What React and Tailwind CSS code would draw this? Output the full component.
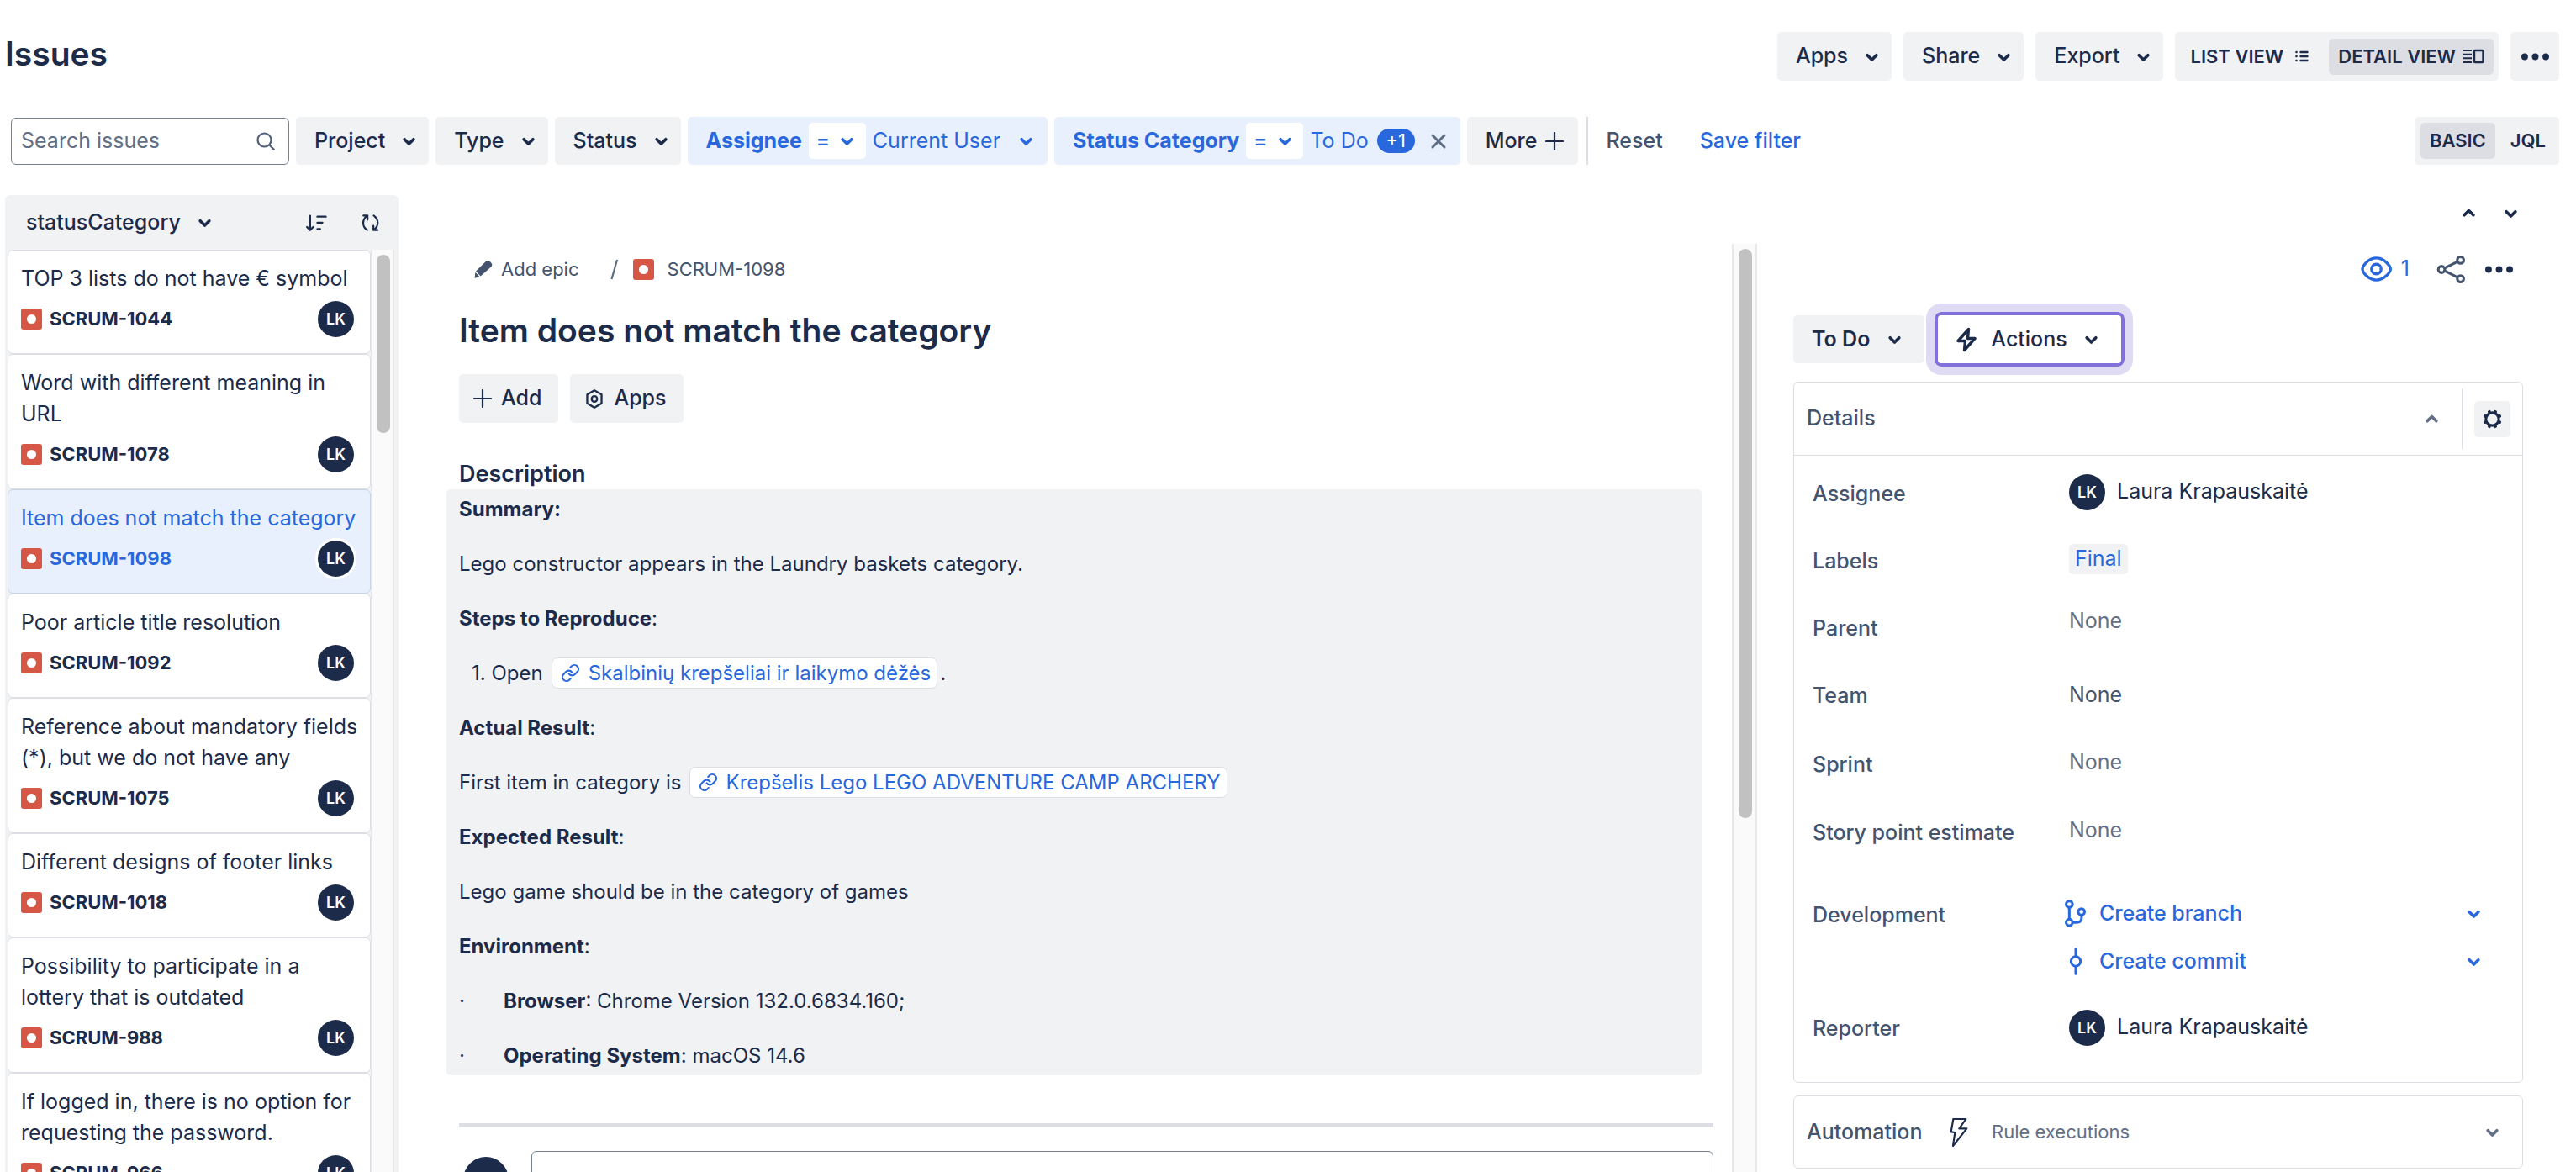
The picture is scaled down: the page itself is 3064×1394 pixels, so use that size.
import { Link } from "lucide-react";

const ISSUES = [
  { title: "TOP 3 lists do not have € symbol", id: "SCRUM-1044" },
  { title: "Word with different meaning in URL", id: "SCRUM-1078" },
  { title: "Item does not match the category", id: "SCRUM-1098", selected: true },
  { title: "Poor article title resolution", id: "SCRUM-1092" },
  { title: "Reference about mandatory fields (*), but we do not have any", id: "SCRUM-1075" },
  { title: "Different designs of footer links", id: "SCRUM-1018" },
  { title: "Possibility to participate in a lottery that is outdated", id: "SCRUM-988" },
  { title: "If logged in, there is no option for requesting the password.", id: "SCRUM-966" },
];

function Chevron({ up = false, className = "" }) {
  return (
    <svg viewBox="0 0 24 24" fill="none" stroke="currentColor" strokeWidth="2" strokeLinecap="round" strokeLinejoin="round" className={`size-[43px] shrink-0 ${className}`} aria-hidden="true">
      <path d={up ? "M9 13.3l3-3 3 3" : "M9 11l3 3 3-3"} />
    </svg>
  );
}

function Dots() {
  return (
    <svg viewBox="0 0 24 24" fill="currentColor" className="size-[43px]" aria-hidden="true">
      <circle cx="5" cy="12" r="2.2" />
      <circle cx="12" cy="12" r="2.2" />
      <circle cx="19" cy="12" r="2.2" />
    </svg>
  );
}

function BugIcon() {
  return (
    <svg viewBox="0 0 25 25" className="size-[25px] shrink-0" aria-hidden="true">
      <rect width="25" height="25" rx="3" fill="#d65745" />
      <circle cx="12.5" cy="12.5" r="5.5" fill="#fff" />
    </svg>
  );
}

function Plus({ className = "" }) {
  return (
    <svg viewBox="0 0 22 22" stroke="currentColor" strokeWidth="2.2" strokeLinecap="round" className={`size-[22px] shrink-0 ${className}`} aria-hidden="true">
      <path d="M11 1v20M1 11h20" />
    </svg>
  );
}

function Avatar({ ring = false }) {
  return (
    <span className={`flex size-[43px] shrink-0 items-center justify-center rounded-full bg-[#1c2b4a] text-[18px] font-semibold text-white ${ring ? "ring-[3px] ring-white" : ""}`}>
      LK
    </span>
  );
}

function MenuButton({ children, tall = false, status = false }) {
  return (
    <button className={`flex shrink-0 items-center rounded-[5px] bg-[#f1f2f4] pl-[22px] ${tall ? "h-[58px]" : "h-[57px]"} ${status ? "gap-2 pr-[14px] font-semibold" : "gap-[7px] pr-0.5 font-medium"}`}>
      {children}
      <Chevron />
    </button>
  );
}

function OperatorButton() {
  return (
    <button className="mx-2 flex h-[43px] w-[68px] items-center justify-center rounded-[5px] bg-white pl-2 font-medium" aria-label="Operator">
      =
      <Chevron className="-ml-px" />
    </button>
  );
}

function Header() {
  return (
    <header className="flex items-center justify-between pr-5 pl-1.5">
      <h1 className="mb-1.5 text-[39px] leading-[48px] font-semibold">Issues</h1>
      <div className="flex gap-[14px]">
        <MenuButton tall>Apps</MenuButton>
        <MenuButton tall>Share</MenuButton>
        <MenuButton tall>Export</MenuButton>
        <div className="flex items-center rounded-[5px] bg-[#f1f2f4] pr-1.5 text-[22px] font-semibold">
          <button className="flex h-[43px] items-center gap-[14px] pr-6 pl-[18px]">
            LIST VIEW
            <svg viewBox="0 0 16 14" stroke="currentColor" strokeWidth="2.4" strokeLinecap="round" className="h-[14px] w-4" aria-hidden="true">
              <path d="M1.4 2h.2M6.5 2h8M1.4 7h.2M6.5 7h8M1.4 12h.2M6.5 12h8" />
            </svg>
          </button>
          <button className="flex h-[43px] items-center gap-2 rounded-[5px] bg-[#dddee4] px-[11px]">
            DETAIL VIEW
            <svg viewBox="0 0 26 18" fill="none" stroke="currentColor" strokeWidth="2" className="h-[18px] w-[26px]" aria-hidden="true">
              <path d="M1 2h10M1 6.7h10M1 11.3h10M1 16h10" />
              <rect x="14" y="2" width="10.5" height="14" rx="1" strokeWidth="2.4" />
            </svg>
          </button>
        </div>
        <button className="flex size-[58px] items-center justify-center rounded-[5px] bg-[#f1f2f4]" aria-label="More actions">
          <Dots />
        </button>
      </div>
    </header>
  );
}

function Filters() {
  return (
    <div className="mt-[43px] flex items-center pr-5 pl-[13px]">
      <div className="flex flex-1 items-center gap-2">
        <label className="flex h-[56px] w-[331px] shrink-0 items-center rounded-[6px] border border-[#758195] pr-4 pl-[11px]">
          <span className="sr-only">Search issues</span>
          <input type="text" placeholder="Search issues" className="min-w-0 flex-1 bg-transparent outline-none placeholder:text-[#626f86]" />
          <svg viewBox="0 0 22 22" fill="none" stroke="#505f79" strokeWidth="2.2" strokeLinecap="round" className="size-[22px]" aria-hidden="true">
            <circle cx="9.5" cy="9.5" r="8" />
            <path d="M15.5 15.5l5.3 5.3" />
          </svg>
        </label>
        <MenuButton>Project</MenuButton>
        <MenuButton>Type</MenuButton>
        <MenuButton>Status</MenuButton>
        <div className="flex h-[57px] items-center rounded-[5px] bg-[#e9f0fd] pr-1 pl-[22px] text-[#2868dc]">
          <span className="font-bold">Assignee</span>
          <OperatorButton />
          <button className="flex items-center gap-[9px]">
            Current User
            <Chevron />
          </button>
        </div>
        <div className="flex h-[57px] items-center rounded-[5px] bg-[#e9f0fd] pr-4 pl-[22px] text-[#2868dc]">
          <span className="font-bold">Status Category</span>
          <OperatorButton />
          <button className="flex items-center gap-2.5">
            To Do
            <span className="flex h-[29px] w-[45px] items-center justify-center rounded-full bg-[#2868dc] text-[22px] text-white">+1</span>
          </button>
          <button className="ml-[18px]" aria-label="Clear status category">
            <svg viewBox="0 0 20 20" stroke="#5e6c84" strokeWidth="3" strokeLinecap="round" className="size-5" aria-hidden="true">
              <path d="M3 3l14 14M17 3L3 17" />
            </svg>
          </button>
        </div>
        <button className="flex h-[57px] items-center gap-2.5 rounded-[5px] bg-[#f1f2f4] pr-[17px] pl-[22px] font-medium">
          More
          <Plus />
        </button>
        <span className="ml-0.5 h-[57px] w-0.5 bg-[#dddee4]" />
        <button className="ml-[13px] font-medium text-[#44546f]">Reset</button>
        <button className="ml-9 font-medium text-[#2868dc]">Save filter</button>
      </div>
      <div className="flex h-[57px] items-center rounded-[5px] bg-[#f1f2f4] px-[7px] text-[22px] font-semibold">
        <button className="h-[43px] rounded-[5px] bg-[#dddee4] px-[11px]">BASIC</button>
        <button className="h-[43px] pr-[9px] pl-[18px]">JQL</button>
      </div>
    </div>
  );
}

function IssueCard({ title, id, selected }) {
  return (
    <li className={`rounded-[6px] border pt-[15px] pr-1 pb-[19px] pl-[15px] ${selected ? "border-[#c8d3e8] bg-[#e9f0fd] text-[#2868dc]" : "border-[#dddee4] bg-white"}`}>
      <a href={`#${id}`} className="block leading-[37px]">{title}</a>
      <div className="mt-2 flex items-center pr-[15px]">
        <BugIcon />
        <span className="ml-[9px] flex-1 text-[22px] font-bold">{id}</span>
        <Avatar ring={selected} />
      </div>
    </li>
  );
}

function Sidebar() {
  return (
    <aside className="ml-1.5 flex w-[468px] shrink-0 flex-col rounded-t-[6px] bg-[#f1f2f4] pr-[5px] pl-[3px]">
      <div className="flex h-[65px] shrink-0 items-center pr-[17px] pl-[22px]">
        <button className="flex items-center gap-[7px] font-medium">
          statusCategory
          <Chevron />
        </button>
        <button className="ml-auto" aria-label="Sort direction">
          <svg viewBox="400 370 80 66" fill="none" stroke="currentColor" strokeWidth="7" strokeLinecap="round" strokeLinejoin="round" className="h-[22px] w-[27px]" aria-hidden="true">
            <path d="M417 378v50M406 418l11 11 11-11M443 381h30M443 403h18M443 425h10" />
          </svg>
        </button>
        <button className="ml-[39px]" aria-label="Refresh">
          <svg viewBox="600 370 68 66" fill="none" stroke="currentColor" strokeWidth="6.5" strokeLinecap="round" strokeLinejoin="round" className="h-[22px] w-[23px]" aria-hidden="true">
            <path d="M623 429c-19-13-19-36-1-51M609 377h15v15M646 377c19 14 19 37 1 51M660 429h-15v-15" />
          </svg>
        </button>
      </div>
      <div className="flex min-h-0 flex-1">
        <ul className="min-w-0 flex-1">
          {ISSUES.map((issue) => (
            <IssueCard key={issue.id} {...issue} />
          ))}
        </ul>
        <div className="w-7 shrink-0 border-x-2 border-[#e8e8ea] bg-[#fafafa] pt-1.5 pr-[3px] pl-[5px]">
          <div className="h-[212px] rounded-full bg-[#c1c1c1]" />
        </div>
      </div>
    </aside>
  );
}

function SmartLink({ children }) {
  return (
    <a href="#link" className="flex h-[37px] items-center gap-2.5 rounded-[7px] border border-[#dddee4] bg-white pr-[7px] pl-2.5 text-[#2868dc]">
      <Link className="size-[23px]" strokeWidth={2.2} />
      {children}
    </a>
  );
}

function Description() {
  return (
    <div className="mr-[14px] space-y-[22px] rounded-[5px] bg-[#f1f2f4] px-[15px] py-0.5 text-[24px] leading-[43px]">
      <p><strong>Summary:</strong></p>
      <p>Lego constructor appears in the Laundry baskets category.</p>
      <p><strong>Steps to Reproduce</strong>:</p>
      <ol>
        <li className="flex items-center pl-[15px]">
          1. Open
          <span className="w-2.5" />
          <SmartLink>Skalbinių krepšeliai ir laikymo dėžės</SmartLink>
          <span className="ml-[3px]">.</span>
        </li>
      </ol>
      <p><strong>Actual Result</strong>:</p>
      <p className="flex h-[43px] items-center gap-[9px]">
        First item in category is
        <SmartLink>Krepšelis Lego LEGO ADVENTURE CAMP ARCHERY</SmartLink>
      </p>
      <p><strong>Expected Result</strong>:</p>
      <p>Lego game should be in the category of games</p>
      <p><strong>Environment</strong>:</p>
      <p className="flex"><span className="w-[53px]">·</span><span><strong>Browser</strong>: Chrome Version 132.0.6834.160;</span></p>
      <p className="flex"><span className="w-[53px]">·</span><span><strong>Operating System</strong>: macOS 14.6</span></p>
    </div>
  );
}

function IssueContent() {
  return (
    <div className="min-w-0 flex-1 pr-[22px] pl-[57px]">
      <div className="pl-[15px]">
        <nav className="flex h-[60px] items-center pl-[18px] text-[22px] text-[#44546f]">
          <svg viewBox="72 60 64 64" fill="#44546f" className="size-[22px]" aria-hidden="true">
            <path d="M113 65q8-5 16 3t3 15l-38 34-16-18zM76 103l14 15-15 5q-2 0-1-3z" />
          </svg>
          <button className="ml-2.5">Add epic</button>
          <svg viewBox="0 0 9 25" stroke="#5e6c84" strokeWidth="2.2" className="ml-[37px] h-[25px] w-[9px]" aria-hidden="true">
            <path d="M8 1L1.500 24" />
          </svg>
          <span className="w-[18px]" />
          <BugIcon />
          <a href="#SCRUM-1098" className="ml-4">SCRUM-1098</a>
        </nav>
        <h2 className="mt-[19px] text-[39px] leading-[48px] font-semibold">Item does not match the category</h2>
        <div className="mt-7 flex gap-[14px] font-medium">
          <button className="flex h-[58px] items-center gap-[11px] rounded-[5px] bg-[#f1f2f4] pr-5 pl-[17px]">
            <Plus />
            Add
          </button>
          <button className="flex h-[58px] items-center gap-3 rounded-[5px] bg-[#f1f2f4] pr-5 pl-[18px]">
            <svg viewBox="472 518 66 70" fill="none" stroke="currentColor" strokeWidth="7" strokeLinejoin="round" className="h-[23px] w-[22px]" aria-hidden="true">
              <path d="M505 522l26 15v32l-26 15-26-15v-32z" />
              <circle cx="505" cy="553" r="10" />
            </svg>
            Apps
          </button>
        </div>
        <h3 className="mt-[43px] text-[27px] leading-9 font-semibold">Description</h3>
      </div>
      <Description />
      <div className="pl-[15px]">
        <hr className="mt-[57px] h-1 border-0 bg-[#dddee4]" />
        <div className="mt-[29px] flex pl-[5px]">
          <span className="mt-[7px] mr-[27px] size-[54px] rounded-full bg-[#1c2b4a]" />
          <textarea aria-label="Add a comment" className="h-[90px] flex-1 resize-none rounded-[6px] border border-[#758195]" />
        </div>
      </div>
    </div>
  );
}

const NONE = <span className="text-[#626f86]">None</span>;

const PERSON = (
  <span className="flex items-center gap-[14px]">
    <Avatar />
    Laura Krapauskaitė
  </span>
);

const FIELDS = [
  { label: "Assignee", height: "h-20", shift: "pb-1", value: PERSON },
  { label: "Labels", height: "h-20", shift: "pb-1", value: <a href="#final" className="flex h-9 items-center rounded-[5px] bg-[#f1f2f4] px-[7px] text-[#2868dc]">Final</a> },
  { label: "Parent", height: "h-20", shift: "pb-4", value: NONE },
  { label: "Team", height: "h-20", shift: "", value: <span className="text-[#44546f]">None</span> },
  { label: "Sprint", height: "h-[84px]", shift: "pb-1", value: NONE },
  { label: "Story point estimate", height: "h-[78px]", shift: "pb-1", value: NONE },
];

function DevAction({ icon, children }) {
  return (
    <button className="flex h-[57px] items-center font-medium text-[#2868dc]">
      {icon}
      {children}
      <Chevron className="ml-auto" />
    </button>
  );
}

function DetailsPanel() {
  return (
    <section className="mt-[22px] rounded-[6px] border border-[#dddee4]">
      <div className="flex h-[87px] items-center border-b border-[#dddee4] pr-[14px] pl-[15px] text-[#44546f]">
        <h3 className="flex-1 font-medium">Details</h3>
        <button className="text-[#626f86]" aria-label="Collapse details"><Chevron up /></button>
        <span className="mx-[14px] h-[72px] w-px bg-[#dddee4]" />
        <button className="flex size-[43px] items-center justify-center rounded-[5px] bg-[#f1f2f4] text-[#1c2b4a]" aria-label="Configure fields">
          <svg viewBox="-34 -34 68 68" className="size-[23px]" fill="currentColor" aria-hidden="true">
            <circle r="22.500" fill="none" stroke="currentColor" strokeWidth="9" />
            {[22.5, 67.5, 112.5, 157.5, 202.5, 247.5, 292.5, 337.5].map((a) => (
              <rect key={a} x="-5.500" y="-33" width="11" height="12" rx="4" transform={`rotate(${a})`} />
            ))}
          </svg>
        </button>
      </div>
      <dl className="grid grid-cols-[305px_1fr] pt-[5px] pb-[25px] pl-[22px]">
        {FIELDS.map((f) => (
          <div key={f.label} className="contents">
            <dt className="flex items-center pt-0.5 font-medium text-[#44546f]">{f.label}</dt>
            <dd className={`flex items-center ${f.height} ${f.shift}`}>{f.value}</dd>
          </div>
        ))}
        <dt className="mt-[29px] h-[57px] pt-0.5 leading-[57px] font-medium text-[#44546f]">Development</dt>
        <dd className="mt-[29px] mb-2.5 -ml-1.5 flex flex-col pr-9">
          <DevAction
            icon={
              <svg viewBox="465 55 84 104" fill="none" stroke="currentColor" strokeWidth="9" className="mr-[14px] h-[35px] w-7" aria-hidden="true">
                <circle cx="484" cy="74" r="11.500" />
                <circle cx="527" cy="101" r="11.500" />
                <circle cx="484" cy="139" r="11.500" />
                <path d="M484 86v41M528 113v8q0 18-18 18h-14" />
              </svg>
            }
          >
            Create branch
          </DevAction>
          <DevAction
            icon={
              <svg viewBox="463 229 84 104" fill="none" stroke="currentColor" strokeWidth="9" strokeLinecap="round" className="mr-[14px] h-[35px] w-7" aria-hidden="true">
                <circle cx="505" cy="281" r="17" />
                <path d="M505 237v26M505 299v26" />
              </svg>
            }
          >
            Create commit
          </DevAction>
        </dd>
        <dt className="flex h-20 items-center pt-1 font-medium text-[#44546f]">Reporter</dt>
        <dd className="flex h-20 items-center">{PERSON}</dd>
      </dl>
    </section>
  );
}

function IssueDetails() {
  return (
    <div className="w-[974px] shrink-0 pr-[63px] pl-[43px]">
      <div className="flex h-[60px] items-center justify-end pr-[7px]">
        <button className="flex items-center gap-[11px] text-[#2868dc]" aria-label="Watchers: 1">
          <svg viewBox="744 854 110 94" fill="none" stroke="currentColor" strokeWidth="10" className="h-[32px] w-[37px]" aria-hidden="true">
            <path d="M750 901c0-12 22-39 49-39s50 27 50 39-23 39-50 39-49-27-49-39z" />
            <circle cx="799" cy="901" r="17" />
          </svg>
          1
        </button>
        <button className="ml-8 text-[#44546f]" aria-label="Share issue">
          <svg viewBox="1012 850 104 104" fill="none" stroke="currentColor" strokeWidth="9" className="size-[35px]" aria-hidden="true">
            <circle cx="1030" cy="902" r="11.500" />
            <circle cx="1097" cy="869" r="11.500" />
            <circle cx="1097" cy="935" r="11.500" />
            <path d="M1041 897l46-23M1041 907l46 23" />
          </svg>
        </button>
        <button className="ml-[18px]" aria-label="More issue actions"><Dots /></button>
      </div>
      <div className="mt-[25px] flex items-center gap-4">
        <MenuButton status>To Do</MenuButton>
        <button className="flex h-[57px] items-center rounded-[4px] bg-white pr-[14px] pl-[22px] font-medium ring-4 ring-[#8270db] outline-[10px] outline-offset-4 outline-[#dfdbf4]">
          <svg viewBox="0 0 24 30" fill="none" stroke="currentColor" strokeWidth="3.4" strokeLinejoin="round" className="mr-[17px] h-[30px] w-6" aria-hidden="true">
            <path d="M14.500 2.500L2 16.500h8.500L9.500 27.500 22 13.500h-8.500z" />
          </svg>
          Actions
          <Chevron className="ml-[7px]" />
        </button>
      </div>
      <DetailsPanel />
      <section className="mt-[15px] flex h-[87px] items-center rounded-[6px] border border-[#dddee4] pr-[14px] pl-[15px]">
        <h3 className="w-[170px] font-medium text-[#44546f]">Automation</h3>
        <svg viewBox="0 0 66 106" fill="none" stroke="currentColor" strokeWidth="6.5" strokeLinejoin="round" className="h-9 w-[22px]" aria-hidden="true">
          <path d="M13 5h45L34 39h27L12 101l7-48-14-2z" />
        </svg>
        <span className="ml-7 flex-1 text-[22px] text-[#626f86]">Rule executions</span>
        <button className="text-[#626f86]" aria-label="Expand automation"><Chevron /></button>
      </section>
    </div>
  );
}

export default function App() {
  return (
    <div className="flex h-screen flex-col overflow-hidden bg-white pt-[38px] font-['Inter',sans-serif] text-[25px] text-[#1c2b4a]">
      <Header />
      <Filters />
      <main className="mt-9 flex min-h-0 flex-1">
        <Sidebar />
        <div className="flex min-w-0 flex-1 flex-col">
          <div className="flex h-[58px] shrink-0 items-start justify-end gap-[7px] pr-14">
            <button aria-label="Previous issue"><Chevron up /></button>
            <button aria-label="Next issue"><Chevron /></button>
          </div>
          <div className="flex min-h-0 flex-1">
            <IssueContent />
            <div className="w-[30px] shrink-0 border-x-2 border-[#e8e8ea] bg-[#fafafa] pt-1.5 pr-1 pl-1.5">
              <div className="h-[677px] rounded-full bg-[#c1c1c1]" />
            </div>
            <IssueDetails />
          </div>
        </div>
      </main>
    </div>
  );
}
